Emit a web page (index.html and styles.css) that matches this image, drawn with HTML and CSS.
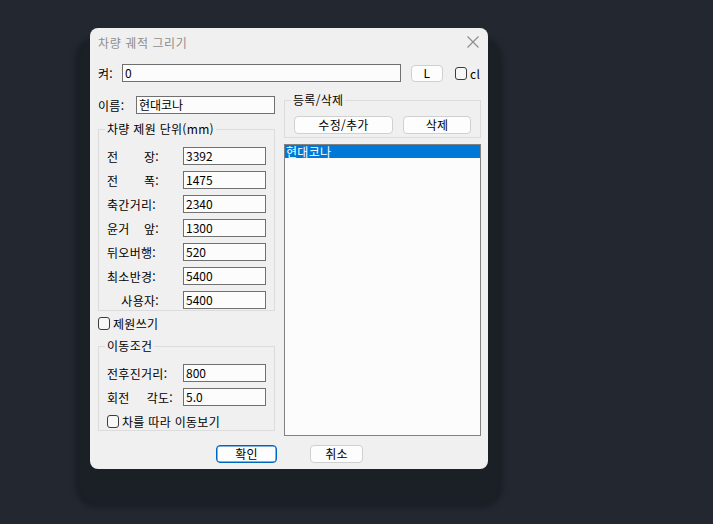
FILE: index.html
```html
<!DOCTYPE html>
<html lang="ko">
<head>
    <meta charset="UTF-8">
    <title>차량 궤적 그리기</title>
    <link rel="stylesheet" href="styles.css">
</head>
<body>
    <div class="dialog">
        <div class="titlebar">
            <span class="title">차량 궤적 그리기</span>
            <svg class="close" width="12" height="12" viewBox="0 0 12 12">
                <path d="M0.5 0.5 L11.5 11.5 M11.5 0.5 L0.5 11.5" stroke="#8c8c8c" stroke-width="1.1" fill="none"/>
            </svg>
        </div>

        <div class="top-row">
            <span class="lbl-key">켜:</span>
            <div class="input input-key">0</div>
            <button class="btn btn-l">L</button>
            <span class="check"></span>
            <span class="check-text">cl</span>
        </div>

        <div class="columns">
            <div class="col-left">
                <div class="name-row">
                    <span class="lbl-name">이름:</span>
                    <div class="input input-name">현대코나</div>
                </div>

                <fieldset class="group group-spec">
                    <legend>차량 제원 단위(mm)</legend>
                    <div class="field"><span class="lbl lbl-split"><span>전</span><span>장:</span></span><div class="input">3392</div></div>
                    <div class="field"><span class="lbl lbl-split"><span>전</span><span>폭:</span></span><div class="input">1475</div></div>
                    <div class="field"><span class="lbl">축간거리:</span><div class="input">2340</div></div>
                    <div class="field"><span class="lbl lbl-split"><span>윤거</span><span>앞:</span></span><div class="input">1300</div></div>
                    <div class="field"><span class="lbl">뒤오버행:</span><div class="input">520</div></div>
                    <div class="field"><span class="lbl">최소반경:</span><div class="input">5400</div></div>
                    <div class="field"><span class="lbl lbl-right">사용자:</span><div class="input">5400</div></div>
                </fieldset>

                <div class="check-row check-spec">
                    <span class="check"></span>
                    <span>제원쓰기</span>
                </div>

                <fieldset class="group group-move">
                    <legend>이동조건</legend>
                    <div class="field"><span class="lbl lbl-wide">전후진거리:</span><div class="input">800</div></div>
                    <div class="field"><span class="lbl lbl-wide lbl-split"><span>회전</span><span>각도:</span></span><div class="input">5.0</div></div>
                    <div class="check-row check-follow">
                        <span class="check"></span>
                        <span>차를 따라 이동보기</span>
                    </div>
                </fieldset>
            </div>

            <div class="col-right">
                <fieldset class="group group-reg">
                    <legend>등록/삭제</legend>
                    <div class="reg-buttons">
                        <button class="btn btn-edit">수정/추가</button>
                        <button class="btn btn-del">삭제</button>
                    </div>
                </fieldset>
                <div class="listbox">
                    <div class="list-item selected">현대코나</div>
                </div>
            </div>
        </div>

        <div class="bottom-row">
            <button class="btn btn-ok">확인</button>
            <button class="btn btn-cancel">취소</button>
        </div>
    </div>
</body>
</html>
```

FILE: styles.css
```css
body {
    margin: 0;
    background-color: #232830;
    font-family: "Noto Sans CJK KR", "Noto Sans", sans-serif;
    font-size: 12px;
    letter-spacing: 0.3px;
    color: #000000;
    height: 524px;
    overflow: hidden;
}
.dialog {
    margin: 28px 0 0 90px;
    width: 398px;
    height: 441px;
    box-sizing: border-box;
    background-color: #f0f0f0;
    border-radius: 8px;
    box-shadow: 0 24px 4px 15px #1b1f26;
    padding: 0 7px 0 8px;
    display: flex;
    flex-direction: column;
}
.titlebar {
    height: 28px;
    display: flex;
    align-items: center;
    justify-content: space-between;
    padding-right: 2px;
}
.title {
    color: #8e8e8e;
    font-size: 12px;
    letter-spacing: 0.6px;
}
.close {
    display: block;
}
.top-row {
    margin-top: 8px;
    height: 18px;
    display: flex;
    align-items: center;
}
.lbl-key {
    width: 24px;
}
.input {
    box-sizing: border-box;
    height: 18px;
    border: 1px solid #707070;
    background-color: #fcfcfc;
    padding-left: 2px;
    line-height: 15px;
    font-size: 12px;
    letter-spacing: 0;
    white-space: nowrap;
}
.input-key {
    width: 279px;
}
.btn {
    box-sizing: border-box;
    height: 18px;
    background-color: #fdfdfd;
    border: 1px solid #d0d0d0;
    border-radius: 4px;
    font-family: inherit;
    font-size: 12px;
    letter-spacing: 0.3px;
    line-height: 14px;
    padding: 0;
    color: #000000;
}
.btn-l {
    width: 32px;
    margin-left: 10px;
    height: 17px;
}
.check {
    box-sizing: border-box;
    width: 12px;
    height: 13px;
    border: 1px solid #3c3c3c;
    border-radius: 3px;
    display: inline-block;
    background-color: #f7f7f7;
}
.top-row .check {
    margin-left: 12px;
}
.check-text {
    margin-left: 3px;
    line-height: 13px;
}
.columns {
    margin-top: 14px;
    display: flex;
    gap: 9px;
}
.col-left {
    width: 177px;
    display: flex;
    flex-direction: column;
}
.col-right {
    width: 197px;
    margin-top: -3px;
    display: flex;
    flex-direction: column;
}
.name-row {
    height: 18px;
    display: flex;
    align-items: center;
}
.lbl-name {
    width: 38px;
}
.input-name {
    width: 139px;
}
.group {
    margin: 0;
    border: 1px solid #dcdcdc;
    padding: 0 8px;
    min-width: 0;
}
.group legend {
    padding: 0 2px;
    margin-left: -2px;
    line-height: 14px;
    font-size: 12px;
}
.group-spec {
    margin-top: 8px;
    padding-top: 11px;
    padding-bottom: 1px;
    display: flex;
    flex-direction: column;
    gap: 6px;
}
.field {
    height: 18px;
    display: flex;
    align-items: center;
}
.field .input {
    width: 83px;
}
.lbl {
    width: 52px;
    margin-right: 24px;
    white-space: nowrap;
}
.lbl-split {
    display: flex;
    justify-content: space-between;
}
.lbl-right {
    text-align: right;
}
.lbl-wide {
    width: 66px;
    margin-right: 10px;
}
.check-row {
    display: flex;
    align-items: center;
    gap: 3px;
    height: 14px;
}
.check-spec {
    margin-top: 5px;
}
.group-move {
    margin-top: 9px;
    padding-top: 11px;
    padding-bottom: 2px;
    display: flex;
    flex-direction: column;
    gap: 6px;
}
.check-follow {
    margin-top: 2px;
}
.group-reg {
    padding: 9px 9px 3px 9px;
}
.group-reg legend {
    margin-left: -3px;
}
.reg-buttons {
    display: flex;
    gap: 10px;
}
.btn-edit {
    width: 99px;
}
.btn-del {
    width: 68px;
}
.listbox {
    margin-top: 6px;
    height: 292px;
    box-sizing: border-box;
    border: 1px solid #828282;
    background-color: #fcfcfc;
}
.list-item {
    height: 13px;
    line-height: 13px;
    padding-left: 1px;
}
.list-item.selected {
    background-color: #0078d7;
    color: #ffffff;
}
.bottom-row {
    margin-top: 9px;
    display: flex;
    justify-content: center;
    gap: 33px;
}
.btn-ok {
    width: 61px;
    border: 1px solid #0067c0;
    box-shadow: inset 0 0 0 0.5px #0067c0;
}
.btn-cancel {
    width: 53px;
}
```
